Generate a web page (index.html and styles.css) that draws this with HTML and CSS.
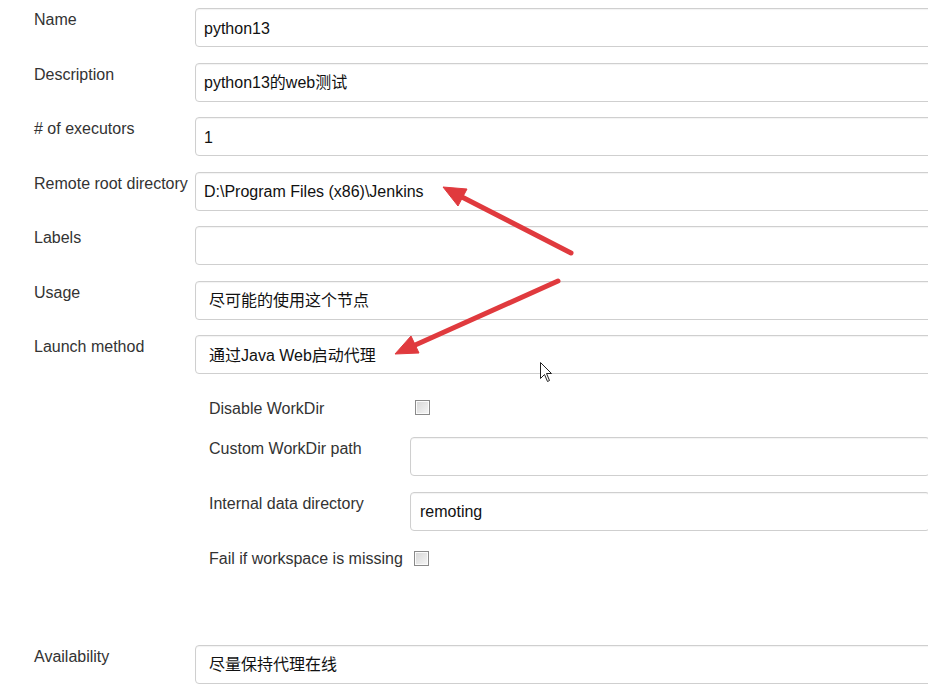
FILE: index.html
```html
<!DOCTYPE html>
<html>
<head>
<meta charset="utf-8">
<link rel="stylesheet" href="styles.css">
</head>
<body>
<div class="page">
  <div class="form">
    <div class="row"><div class="label">Name</div><div class="field"><div class="input">python13</div></div></div>
    <div class="row"><div class="label">Description</div><div class="field"><div class="input">python13的web测试</div></div></div>
    <div class="row"><div class="label"># of executors</div><div class="field"><div class="input">1</div></div></div>
    <div class="row"><div class="label">Remote root directory</div><div class="field"><div class="input">D:\Program Files (x86)\Jenkins</div></div></div>
    <div class="row"><div class="label">Labels</div><div class="field"><div class="input"></div></div></div>
    <div class="row"><div class="label">Usage</div><div class="field"><div class="input select">尽可能的使用这个节点</div></div></div>
    <div class="row"><div class="label">Launch method</div><div class="field"><div class="input select">通过Java Web启动代理</div></div></div>

    <div class="sub">
      <div class="subrow check-row"><div class="sublabel">Disable WorkDir</div><div class="subfield"><span class="checkbox"></span></div></div>
      <div class="subrow custom"><div class="sublabel">Custom WorkDir path</div><div class="subfield"><div class="input"></div></div></div>
      <div class="subrow internal"><div class="sublabel">Internal data directory</div><div class="subfield"><div class="input">remoting</div></div></div>
      <div class="failrow"><span>Fail if workspace is missing</span><span class="checkbox"></span></div>
    </div>

    <div class="row avail"><div class="label">Availability</div><div class="field"><div class="input select">尽量保持代理在线</div></div></div>
  </div>

  <svg class="overlay" width="928" height="685" viewBox="0 0 928 685">
    <g fill="#e03a3e" stroke="#e03a3e">
      <line x1="571" y1="253" x2="460" y2="196" stroke-width="5" stroke-linecap="round"/>
      <polygon points="443,187 467,189 458,206" stroke-width="1" stroke-linejoin="round"/>
      <line x1="558" y1="281" x2="413" y2="346" stroke-width="5" stroke-linecap="round"/>
      <polygon points="395,354 419,353 411,336" stroke-width="1" stroke-linejoin="round"/>
    </g>
    <path d="M540.5,362.5 L540.5,378.5 L544.5,374.5 L547.5,381.5 L549.5,380.5 L546.5,373.5 L551.5,373.5 Z" fill="#fff" stroke="#222" stroke-width="1"/>
  </svg>
</div>
</body>
</html>
```

FILE: styles.css
```css
html, body {
  margin: 0;
  padding: 0;
  background: #fff;
}
body {
  overflow: hidden;
  width: 928px;
  height: 685px;
  font-family: "Liberation Sans", Arial, "Noto Sans CJK SC", sans-serif;
  font-size: 16px;
  line-height: 20px;
  color: #333;
}
.page {
  position: relative;
  width: 928px;
  height: 685px;
}
.form {
  padding: 8px 0 0 34px;
}
.row {
  display: grid;
  grid-template-columns: 161px 760px;
  align-items: start;
  margin-bottom: 15.5px;
}
.label {
  padding-top: 2px;
  white-space: nowrap;
}
.input {
  box-sizing: border-box;
  height: 39px;
  border: 1px solid #cfcfcf;
  border-radius: 4px;
  background: #fff;
  padding: 2px 8px 0;
  display: flex;
  align-items: center;
  color: #111;
  white-space: nowrap;
  box-shadow: inset 0 1px 1px rgba(0,0,0,0.05);
}
.input.select {
  padding-left: 13px;
}
.sub {
  margin-left: 175px;
  padding-top: 8px;
}
.subrow {
  display: grid;
  grid-template-columns: 201px 520px;
  align-items: start;
}
.check-row {
  height: 20px;
}
.check-row .sublabel {
  padding-top: 1px;
}
.check-row .checkbox {
  margin: 2px 0 0 5px;
}
.custom {
  margin-top: 19px;
}
.custom .sublabel, .internal .sublabel {
  padding-top: 2px;
}
.internal {
  margin-top: 16px;
}
.subfield .input {
  padding-left: 9px;
}
.failrow {
  margin-top: 18px;
  display: flex;
  align-items: flex-start;
  height: 20px;
}
.failrow .checkbox {
  margin: 2px 0 0 11px;
}
.checkbox {
  display: block;
  box-sizing: border-box;
  width: 15px;
  height: 15px;
  border: 1px solid #8a8a8a;
  box-shadow: inset 0 0 0 1px #fbfbfb;
  background: linear-gradient(135deg, #d6d6d6, #f6f6f6);
}
.row.avail {
  margin-top: 76px;
}
.overlay {
  position: absolute;
  left: 0;
  top: 0;
  pointer-events: none;
}
```
